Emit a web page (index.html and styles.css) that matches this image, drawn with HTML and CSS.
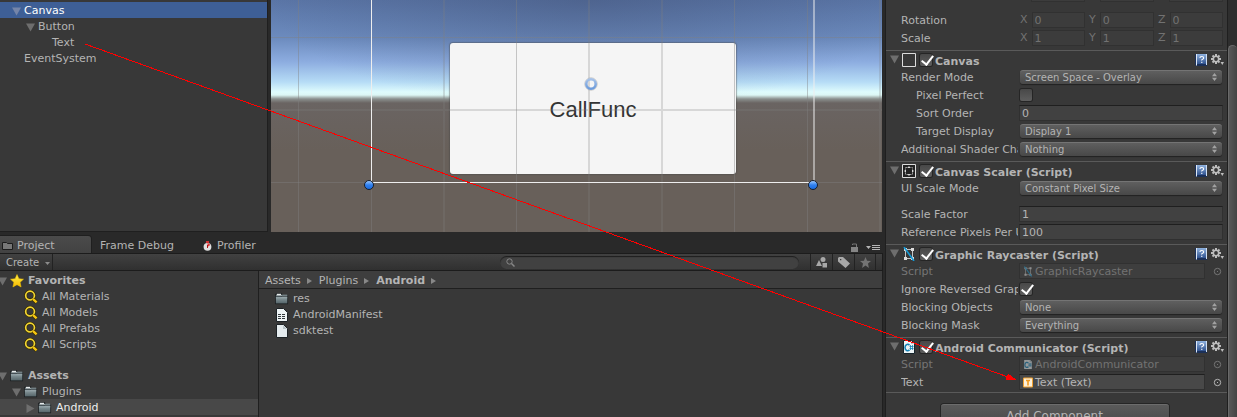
FILE: index.html
```html
<!DOCTYPE html>
<html lang="en">
<head>
<meta charset="utf-8">
<title>Unity Editor</title>
<link rel="stylesheet" href="styles.css">
</head>
<body>
<svg class="defs" aria-hidden="true">
  <defs>
    <linearGradient id="gFolder" x1="0" y1="0" x2="0" y2="1"><stop offset="0" stop-color="#8b9b9f"/><stop offset="1" stop-color="#56666b"/></linearGradient>
    <linearGradient id="gStar" x1="0" y1="0" x2="0" y2="1"><stop offset="0" stop-color="#fff04a"/><stop offset="1" stop-color="#f6b800"/></linearGradient>
    <linearGradient id="gBook" x1="0" y1="0" x2="0" y2="1"><stop offset="0" stop-color="#8fb2df"/><stop offset="1" stop-color="#2f528f"/></linearGradient>
    <linearGradient id="gDot" x1="0" y1="0" x2="0" y2="1"><stop offset="0" stop-color="#a9d0ff"/><stop offset=".5" stop-color="#2f80f0"/><stop offset="1" stop-color="#1768dc"/></linearGradient>
    <linearGradient id="gRing" x1="0" y1="0" x2="0" y2="1"><stop offset="0" stop-color="#a5c1e8"/><stop offset="1" stop-color="#6d9cdc"/></linearGradient>
  </defs>
  <symbol id="folder" viewBox="0 0 16 14"><path d="M1 2h1V1h5v1h1v1h6v9H1z" fill="#1d2123" stroke="#1d2123" stroke-width="2" stroke-linejoin="round"/><path d="M2 1h5v2h-5z" fill="#e6eaeb"/><path d="M1 3h6l1-1h6v2H1z" fill="#b4c3c8"/><path d="M1 5h13v7H1z" fill="url(#gFolder)"/><path d="M1 4.500h6l1-1h6" fill="none" stroke="#303b40"/><path d="M1 5.500h13" stroke="#a4b4b9"/></symbol>
  <symbol id="search" viewBox="0 0 15 14"><circle cx="6.500" cy="5.500" r="4.700" fill="none" stroke="#332900" stroke-width="3"/><circle cx="6.500" cy="5.500" r="4.700" fill="none" stroke="#f2d633" stroke-width="1.800"/><path d="M9.500 9l4 3.800" stroke="#332900" stroke-width="4"/><path d="M9.500 9l4 3.800" stroke="#f4c512" stroke-width="2.600"/></symbol>
  <symbol id="star" viewBox="0 0 14 14"><path d="M7 .5l1.900 4.200 4.600.5-3.400 3.100 1 4.700L7 10.700 2.900 13l1-4.700L.5 5.200l4.600-.5z" stroke="#f6c800" stroke-width=".5" fill="url(#gStar)"/></symbol>
  <symbol id="help" viewBox="0 0 14 14"><path d="M1 1h12v12H2L1 12z" fill="#1b3058"/><path d="M3 1h10v10H3z" fill="url(#gBook)"/><path d="M2.500 1v11.500" fill="none" stroke="#dfe8f5"/><path d="M12.500 1v11" stroke="#cfdef2"/><path d="M5.900 5q0-1.500 1.900-1.500t1.900 1.500q0 .8-1.100 1.300t-.8 1.200M7.800 8.700v1.400" fill="none" stroke="#fff" stroke-width="1.100"/></symbol>
  <symbol id="gear" viewBox="0 0 14 12"><g stroke="#bdbdbd" stroke-width="2"><path d="M5 0v2.500M5 7.500V10M0 5h2.500M7.500 5H10M1.500 1.500l1.800 1.800M6.700 6.700l1.800 1.800M1.500 8.500l1.800-1.800M6.700 3.300l1.800-1.800"/></g><circle cx="5" cy="5" r="2.700" fill="none" stroke="#bdbdbd" stroke-width="1.600"/><path d="M9.500 8H13l-1.700 3z" fill="#bdbdbd"/></symbol>
  <symbol id="fold" viewBox="0 0 9 9"><path d="M0 .5h9L4.500 8.500z" fill="currentColor"/></symbol>
  <symbol id="updown" viewBox="0 0 5 8"><path d="M0 3.200L2.500 0 5 3.200zM0 4.800L2.500 8 5 4.800z" fill="#a2a2a2"/></symbol>
  <symbol id="pick" viewBox="0 0 9 9"><circle cx="4.500" cy="4.500" r="3.200" fill="none" stroke="currentColor"/><path d="M4 4h1v1H4z" fill="currentColor"/></symbol>
  <symbol id="ray" viewBox="0 0 14 14"><path d="M3 2.500h8M3 11.500h8M3.500 2v10M10.500 2v10" stroke="#c4c4c4"/><path d="M2 1h3v3H2zM9 1h3v3H9zM2 10h3v3H2zM9 10h3v3H9z" fill="#ddd"/><path d="M2 0l10 14" stroke="#1299d6" stroke-width="1.600"/></symbol>
  <symbol id="csharp" viewBox="0 0 12 14"><path d="M.5.500h8l3 3v10H.5z" fill="#edf3f5" stroke="#16242b"/><path d="M8 1v3h3" fill="#b9c6cc"/><path d="M6.500 5.200Q5.500 4 4 4.400 2 5 2 7.500T4 10.700q1.500.3 2.500-.8" fill="none" stroke="#1784b8" stroke-width="1.600"/><path d="M7.500 5v5M9.500 5v5M6.500 6.500h4M6.500 8.500h4" stroke="#1784b8" stroke-width=".8"/></symbol>
</svg>

<main class="editor">
  <div class="workspace">
    <div class="upper">
      <section class="hierarchy" aria-label="Hierarchy">
        <div class="row d1 selected"><svg class="fold"><use href="#fold"/></svg><span>Canvas</span></div>
        <div class="row d2"><svg class="fold"><use href="#fold"/></svg><span>Button</span></div>
        <div class="row d3"><span class="fold"></span><span>Text</span></div>
        <div class="row d1"><span class="fold"></span><span>EventSystem</span></div>
      </section>
      <section class="scene" aria-label="Scene">
        <button class="ui-button" type="button">CallFunc</button>
        <svg class="overlay" viewBox="0 0 611 232" preserveAspectRatio="xMinYMin slice">
          <g stroke="#808080" stroke-opacity=".42">
            <path d="M27.500 0v232M463.500 0v232M245.500 0v232M536.500 0v232M0 37.500h611M0 182.500h611"/>
            <path d="M173 0v232M318 0v232M391 0v232M609 0v232M0 110h611" stroke-width="2" stroke-opacity=".25"/>
            <path d="M100.500 0v232"/>
          </g>
          <path d="M100.500 0v182.500h442.500V0" fill="none" stroke="#eee"/>
          <circle cx="98" cy="185" r="4.500" fill="url(#gDot)" stroke="#161e2c"/>
          <circle cx="542" cy="185" r="4.500" fill="url(#gDot)" stroke="#161e2c"/>
          <circle cx="320" cy="84" r="6.200" fill="none" stroke="#999" stroke-opacity=".5"/>
          <circle cx="320" cy="84" r="4.700" fill="none" stroke="url(#gRing)" stroke-width="2.600"/>
        </svg>
      </section>
    </div>

    <section class="project" aria-label="Project">
      <div class="tabs">
        <button class="tab active" type="button"><svg width="11" height="10" viewBox="0 0 11 10"><path d="M.5 1.500h4l1 1h5v6H.5z" fill="#777" stroke="#1c1c1c"/></svg>Project</button>
        <button class="tab frame" type="button">Frame Debug</button>
        <button class="tab profiler" type="button"><svg width="9" height="10" viewBox="0 0 9 10"><path d="M3 0h3v2H3z" fill="#c33"/><circle cx="4.500" cy="5.800" r="3.900" fill="#e0e0e0"/><path d="M4.500 6V2a4 4 0 012.800 2z" fill="#d33"/><path d="M4.500 4v3" stroke="#a11"/></svg>Profiler</button>
        <span class="tab-tools">
          <svg width="8" height="10" viewBox="0 0 8 10"><path d="M0 4h7v5H0z" fill="#858585"/><path d="M1.500 2V1h4v3" fill="none" stroke="#777"/></svg>
          <svg width="14" height="6" viewBox="0 0 14 6"><path d="M0 1h5L2.500 4zM6 0h8v1H6zM6 2h8v1H6zM6 4h8v1H6z" fill="#b5b5b5"/></svg>
        </span>
      </div>
      <div class="toolbar">
        <button class="create" type="button">Create<svg width="5" height="3" viewBox="0 0 5 3"><path d="M0 0h5L2.500 3z" fill="#8c8c8c"/></svg></button>
        <label class="search"><svg width="9" height="9" viewBox="0 0 9 9"><circle cx="3.500" cy="3.500" r="2.700" fill="none" stroke="#888"/><path d="M5.500 5.500L8.500 8.500" stroke="#888" stroke-width="1.500"/></svg><input type="search" aria-label="Search assets"></label>
        <div class="filters">
          <button type="button" aria-label="Filter by type"><svg width="12" height="11" viewBox="0 0 12 11"><circle cx="7" cy="2.500" r="2.500"/><path d="M0 9l3-6 3 6zM6.500 6H11v4.500H6.500z"/></svg></button>
          <button type="button" aria-label="Filter by label"><svg width="12" height="11" viewBox="0 0 12 11"><path fill-rule="evenodd" d="M1 0h4l7 6.500L7.500 11 0 4.500V1zM2 2v1.300h1.300V2z"/></svg></button>
          <button type="button" aria-label="Save search" class="dim"><svg width="11" height="11" viewBox="0 0 14 14"><path d="M7 0l2 4.700 5 .4-3.800 3.300L11.300 14 7 10.800 2.700 14l1.100-5.600L0 5.100l5-.4z"/></svg></button>
        </div>
      </div>
      <div class="browser">
        <nav class="tree" aria-label="Folders">
          <div class="row t1 bold"><svg class="fold"><use href="#fold"/></svg><svg class="ico"><use href="#star"/></svg>Favorites</div>
          <div class="row t2"><span class="fold"></span><svg class="ico"><use href="#search"/></svg>All Materials</div>
          <div class="row t2"><span class="fold"></span><svg class="ico"><use href="#search"/></svg>All Models</div>
          <div class="row t2"><span class="fold"></span><svg class="ico"><use href="#search"/></svg>All Prefabs</div>
          <div class="row t2"><span class="fold"></span><svg class="ico"><use href="#search"/></svg>All Scripts</div>
          <div class="row t1 bold assets"><svg class="fold"><use href="#fold"/></svg><svg class="ico"><use href="#folder"/></svg>Assets</div>
          <div class="row t2"><svg class="fold"><use href="#fold"/></svg><svg class="ico"><use href="#folder"/></svg>Plugins</div>
          <div class="row t3 current"><svg class="fold closed"><use href="#fold"/></svg><svg class="ico"><use href="#folder"/></svg>Android</div>
        </nav>
        <div class="files">
          <div class="crumbs"><span>Assets</span><i></i><span>Plugins</span><i></i><b>Android</b><i></i></div>
          <div class="row"><svg class="ico"><use href="#folder"/></svg>res</div>
          <div class="row"><svg class="ico" viewBox="0 0 14 14"><path d="M1.500.500h7l4 4v9h-11z" fill="#edf3f5" stroke="#1c2226"/><path d="M3 6.500h8M3 8.500h8M3 10.500h8" stroke="#33393c" stroke-dasharray="3 1"/></svg>AndroidManifest</div>
          <div class="row"><svg class="ico" viewBox="0 0 14 14"><path d="M1.500.500h7l4 4v9h-11z" fill="#e4ebee" stroke="#1c2226"/><path d="M8 1v4h4" fill="#b8c3c8"/></svg>sdktest</div>
        </div>
      </div>
    </section>
  </div>

  <section class="inspector" aria-label="Inspector">
    <div class="props">
      <div class="transform">
        <div class="clipped"><i></i><i></i><i></i></div>
        <div class="prop off"><span class="lbl">Rotation</span><div class="vec"><label>X<input value="0" disabled></label><label>Y<input value="0" disabled></label><label>Z<input value="0" disabled></label></div></div>
        <div class="prop off"><span class="lbl">Scale</span><div class="vec"><label>X<input value="1" disabled></label><label>Y<input value="1" disabled></label><label>Z<input value="1" disabled></label></div></div>
      </div>

      <div class="component">
        <header><svg class="fold"><use href="#fold"/></svg><svg class="cico" viewBox="0 0 14 14"><path d="M.5.500h13v13H.5z" fill="none" stroke="#ddd"/></svg><input type="checkbox" id="c1" checked><label for="c1">Canvas</label><svg class="help"><use href="#help"/></svg><svg class="gear"><use href="#gear"/></svg></header>
        <div class="prop"><label class="lbl" for="rm">Render Mode</label><div class="pop"><select id="rm"><option>Screen Space - Overlay</option></select><svg><use href="#updown"/></svg></div></div>
        <div class="prop"><label class="lbl in" for="pp">Pixel Perfect</label><input type="checkbox" id="pp"></div>
        <div class="prop"><label class="lbl in" for="so">Sort Order</label><input class="field" id="so" value="0"></div>
        <div class="prop"><label class="lbl in" for="td">Target Display</label><div class="pop"><select id="td"><option>Display 1</option></select><svg><use href="#updown"/></svg></div></div>
        <div class="prop"><label class="lbl" for="as">Additional Shader Channels</label><div class="pop"><select id="as"><option>Nothing</option></select><svg><use href="#updown"/></svg></div></div>
      </div>

      <div class="component">
        <header><svg class="fold"><use href="#fold"/></svg><svg class="cico" viewBox="0 0 14 14"><path d="M.5.500h13v13H.5z" fill="#222" stroke="#ddd"/><path d="M3.500 3.500h7v7h-7z" fill="none" stroke="#999" stroke-dasharray="2 1"/><path d="M7 2l1.500 2h-3zM7 12l1.500-2h-3zM2 7l2-1.500v3zM12 7l-2-1.500v3z" fill="#ddd"/></svg><input type="checkbox" id="c2" checked><label for="c2">Canvas Scaler (Script)</label><svg class="help"><use href="#help"/></svg><svg class="gear"><use href="#gear"/></svg></header>
        <div class="prop spaced"><label class="lbl" for="us">UI Scale Mode</label><div class="pop"><select id="us"><option>Constant Pixel Size</option></select><svg><use href="#updown"/></svg></div></div>
        <div class="prop"><label class="lbl" for="sf">Scale Factor</label><input class="field" id="sf" value="1"></div>
        <div class="prop"><label class="lbl" for="rp">Reference Pixels Per Unit</label><input class="field" id="rp" value="100"></div>
      </div>

      <div class="component">
        <header><svg class="fold"><use href="#fold"/></svg><svg class="cico"><use href="#ray"/></svg><input type="checkbox" id="c3" checked><label for="c3">Graphic Raycaster (Script)</label><svg class="help"><use href="#help"/></svg><svg class="gear"><use href="#gear"/></svg></header>
        <div class="prop off"><span class="lbl">Script</span><button class="object" type="button" disabled><svg><use href="#ray"/></svg>GraphicRaycaster</button><svg class="pick"><use href="#pick"/></svg></div>
        <div class="prop"><label class="lbl" for="ir">Ignore Reversed Graphics</label><input type="checkbox" id="ir" checked></div>
        <div class="prop"><label class="lbl" for="bo">Blocking Objects</label><div class="pop"><select id="bo"><option>None</option></select><svg><use href="#updown"/></svg></div></div>
        <div class="prop"><label class="lbl" for="bm">Blocking Mask</label><div class="pop"><select id="bm"><option>Everything</option></select><svg><use href="#updown"/></svg></div></div>
      </div>

      <div class="component last">
        <header><svg class="fold"><use href="#fold"/></svg><svg class="cico"><use href="#csharp"/></svg><input type="checkbox" id="c4" checked><label for="c4">Android Communicator (Script)</label><svg class="help"><use href="#help"/></svg><svg class="gear"><use href="#gear"/></svg></header>
        <div class="prop off"><span class="lbl">Script</span><button class="object" type="button" disabled><svg><use href="#csharp"/></svg>AndroidCommunicator</button><svg class="pick"><use href="#pick"/></svg></div>
        <div class="prop"><span class="lbl">Text</span><button class="object" type="button"><svg viewBox="0 0 10 10"><path d="M.5.500h9v9h-9z" fill="#fdf0d8" stroke="#f0a030"/><path d="M3 3h4M5 3v5" stroke="#f09a20" stroke-width="1.600"/></svg>Text (Text)</button><svg class="pick"><use href="#pick"/></svg></div>
      </div>
      <button class="add" type="button">Add Component</button>
    </div>
    <div class="scroll"><div class="thumb"></div></div>
  </section>
</main>

<svg class="arrow" viewBox="0 0 1237 417" preserveAspectRatio="xMinYMin slice" aria-hidden="true" shape-rendering="crispEdges"><path d="M85 44L1008 377" stroke="#f00"/><path d="M1016.500 380l-11 0 2.500-6.500z" fill="#f00"/></svg>
</body>
</html>
```
FILE: styles.css
```css
* { box-sizing: border-box; }
body {
  margin: 0;
  height: 100vh;
  overflow: hidden;
  position: relative;
  background: #292929;
  color: #b4b4b4;
  font: 11px/16px "DejaVu Sans", Verdana, sans-serif;
}
button, input, select { font: inherit; color: inherit; margin: 0; border: 0; padding: 0; background: none; min-width: 0; border-radius: 0; }
svg { flex: none; display: block; }
.defs { position: absolute; width: 0; height: 0; }
.arrow { position: absolute; inset: 0; width: 100%; height: 100%; pointer-events: none; }
.editor { display: flex; height: 100%; gap: 2px; }
.workspace { flex: 1; min-width: 0; display: flex; flex-direction: column; gap: 4px; }
.upper { display: flex; gap: 3px; height: 232px; padding-right: 1px; }

/* Rows shared by the hierarchy, the tree and the file list */
.row { display: flex; align-items: center; height: 16px; padding-top: 2px; white-space: nowrap; }
.fold { width: 9px; height: 9px; margin-right: 3px; color: #6e6e6e; flex: none; }
.closed { transform: rotate(-90deg); }
.ico { width: 14px; height: 14px; margin-right: 4px; }
.bold { font-weight: bold; }

.hierarchy { width: 268px; padding-top: 2px; background: #383838; border: 1px solid #1f1f1f; border-width: 0 1px 1px 0; }
.d1 { padding-left: 12px; }
.d2 { padding-left: 26px; }
.d3 { padding-left: 40px; }
.selected { background: #3e5f96; color: #fff; }
.selected .fold { color: #7585a8; }

.scene {
  flex: 1;
  position: relative;
  overflow: hidden;
  background:
    radial-gradient(ellipse 320px 110px at 52% 0, rgba(50, 60, 90, .3), transparent),
    linear-gradient(#5a75a6 0, #6c8bbe 38px, #8dade0 62px, #b6dcf6 82px, #dffcfd 92px, #dcf7f5 95px, #8a8f8d 99px, #6a6462 103px, #68605a 150px, #68605a 100%);
}
.overlay { position: absolute; inset: 0; width: 100%; height: 100%; }
.ui-button {
  position: absolute;
  left: 179px;
  top: 43px;
  width: 286px;
  height: 131px;
  padding-top: 2px;
  border-radius: 3px;
  background: #f5f5f5;
  box-shadow: 0 0 1px 1px rgba(70, 70, 70, .4);
  color: #333;
  font: 22px "Liberation Sans", Arial, sans-serif;
}

.project { flex: 1; min-height: 0; display: flex; flex-direction: column; }
.tabs { display: flex; height: 17px; font-size: 11px; }
.tab { display: flex; align-items: center; gap: 4px; padding-top: 2px; }
.active { width: 91px; padding-left: 2px; background: linear-gradient(#4b4b4b, #424242); border-radius: 0 3px 0 0; box-shadow: 0 0 0 1px #1f1f1f; }
.frame { padding-left: 9px; width: 106px; }
.profiler { padding-left: 6px; gap: 5px; }
.tab-tools { margin-left: auto; display: flex; align-items: center; gap: 7px; padding: 6px 3px 0 0; }
.toolbar { display: flex; align-items: center; height: 18px; background: linear-gradient(#414141, #303030); border: 1px solid #1c1c1c; border-width: 1px 1px 1px 0; position: relative; }
.create { display: flex; align-items: center; gap: 6px; height: 16px; width: 53px; padding: 2px 0 0 6px; border-right: 1px solid #222; font-size: 10px; }
.search { display: flex; align-items: center; flex: 1; max-width: 299px; height: 13px; margin: 0 11px 0 auto; padding-left: 6px; border-radius: 7px; background: #414141; box-shadow: inset 0 1px 1px #1d1d1d; }
.search input { flex: 1; outline: none; appearance: none; }
.filters { display: flex; width: 72px; height: 16px; }
.filters button { display: grid; place-items: center; width: 22px; border-left: 1px solid #222; fill: #a8a8a8; }
.filters .dim { fill: #737373; border-right: 1px solid #222; }
.browser { flex: 1; display: flex; min-height: 0; }
.tree { width: 259px; padding-top: 1px; background: #383838; border-right: 1px solid #1f1f1f; overflow: hidden; }
.t1 { margin-left: -2px; }
.t2 { padding-left: 12px; }
.t3 { padding-left: 26px; }
.assets { margin-top: 15px; }
.current { background: #484848; color: #eee; }
.files { flex: 1; background: #383838; border-right: 1px solid #1f1f1f; }
.files .row { padding-left: 16px; }
.crumbs { display: flex; align-items: center; height: 18px; margin-bottom: 1px; padding: 2px 0 0 6px; background: #3e3e3e; border-bottom: 1px solid #1f1f1f; }
.crumbs i { width: 0; height: 0; margin: 0 7px 0 6px; border: 3px solid transparent; border-left: 5px solid #888; border-right: 0; }

.inspector { width: 352px; display: flex; background: #383838; border-left: 1px solid #1f1f1f; }
.props { flex: 1; min-width: 0; display: flex; flex-direction: column; border-right: 1px solid #1f1f1f; }
.transform { padding-bottom: 3px; }
.clipped { display: flex; gap: 15px; height: 11px; padding: 0 4px 0 145px; }
.clipped i { flex: 1; height: 2px; background: #3c3c3c; border: 1px solid #313131; border-top: 0; }
.component { border-top: 1px solid #5a5a5a; padding-bottom: 3px; }
.last { padding-bottom: 1px; border-bottom: 1px solid #5a5a5a; }
.component header { display: flex; align-items: center; height: 17px; padding: 0 2px 0 4px; font-weight: bold; white-space: nowrap; }
.component header label { flex: 1; padding-top: 4px; }
.cico { width: 14px; height: 14px; margin-right: 4px; }
.component header input { margin-right: 3px; }
.help { width: 14px; height: 14px; margin-right: 3px; }
.gear { width: 14px; height: 12px; }

.prop { display: flex; align-items: center; height: 18px; padding: 0 4px 0 15px; white-space: nowrap; }
.spaced { margin-bottom: 8px; }
.lbl { width: 117px; margin-right: 1px; padding-top: 2px; overflow: hidden; flex: none; }
.in { padding-left: 15px; }
.field, .object, .vec input { height: 16px; background: #414141; border: 1px solid #303030; border-top-color: #1f1f1f; }
.field { flex: 1; padding: 2px 0 0 2px; }
.vec { flex: 1; display: flex; gap: 4px; padding-left: 1px; color: #727272; }
.vec label { flex: 1; min-width: 0; display: flex; align-items: center; gap: 4px; line-height: 18px; }
.vec input { flex: 1; width: 0; padding: 2px 0 0 2px; background: #3c3c3c; border-color: #313131; color: #727272; }
.pop { flex: 1; position: relative; padding: 0 1px; }
.pop select { display: block; appearance: none; width: 100%; height: 14px; padding-left: 5px; font-size: 10px; line-height: 12px; border-radius: 3px; background: linear-gradient(#5f5f5f, #484848); border-top: 1px solid #747474; box-shadow: 0 1px 1px #222; }
.pop svg { position: absolute; right: 6px; top: 3px; width: 5px; height: 8px; pointer-events: none; }
input[type="checkbox"] { appearance: none; flex: none; width: 12px; height: 12px; border-radius: 2px; background: linear-gradient(#484848, #5e5e5e); box-shadow: 0 0 0 1px #252525; position: relative; }
.prop input[type="checkbox"] { margin-left: 1px; }
input[type="checkbox"]:checked::after { content: ""; position: absolute; left: 4px; top: -1px; width: 5px; height: 10px; border: solid #fff; border-width: 0 2px 2px 0; transform: rotate(38deg); }
.object { display: flex; align-items: center; gap: 2px; width: 186px; padding: 1px 0 0 3px; text-align: left; background: #484848; }
.object svg { width: 10px; height: 11px; }
.off .object { background: #3e3e3e; border-color: #313131; color: #727272; }
.off .object svg { opacity: .5; }
.off .pick, .off:has(.object) .lbl { color: #757575; }
.pick { width: 9px; height: 9px; margin-left: 8px; }
.add { align-self: center; flex: none; width: 228px; height: 22px; margin: 11px 4px 0 0; font-size: 12px; border-radius: 3px; background: linear-gradient(#5a5a5a, #484848); border-top: 1px solid #6c6c6c; box-shadow: 0 0 0 1px #252525; }
.scroll { width: 9px; padding-top: 45px; background: #2e2e2e; }
.thumb { height: 100%; border-radius: 5px 5px 0 0; border-left: 1px solid #6a6a6a; border-top: 1px solid #6a6a6a; background: linear-gradient(90deg, #585858, #444); }
```
